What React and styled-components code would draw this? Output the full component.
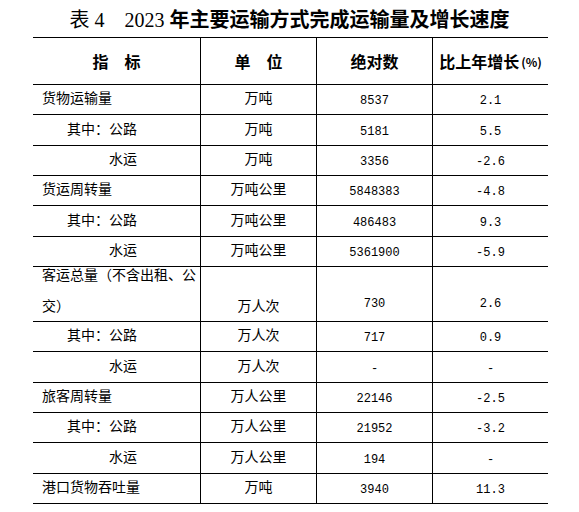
import React from 'react'
import styled, { createGlobalStyle } from 'styled-components'

const GlobalStyle = createGlobalStyle`
	body {
		margin: 0;
		background: #fff;
		color: #000;
		font-family: "Noto Sans CJK SC", sans-serif;
	}
`

const Page = styled.div`
	width: 579px;
	height: 512px;
	padding-top: 7px;
	box-sizing: border-box;
`

const Title = styled.h1`
	margin: 0 0 6px;
	height: 24px;
	line-height: 24px;
	text-align: center;
	font-size: 20px;
	white-space: pre;
`

const TitleLead = styled.span`
	font-family: "Liberation Serif", "Noto Sans CJK SC", serif;
	font-weight: 400;
`

const TitleMain = styled.span`
	font-family: "Noto Sans CJK SC", sans-serif;
	font-weight: 700;
`

const Table = styled.div`
	margin-left: 33px;
	width: 515px;
	border-top: 1px solid #000;
`

const Row = styled.div`
	display: flex;
	height: ${({ $h }) => $h}px;
	box-sizing: border-box;
	border-bottom: 1px solid #000;

	& > * + * {
		border-left: 1px solid #000;
	}
`

const Cell = styled.div`
	display: flex;
	align-items: flex-end;
	justify-content: center;
	box-sizing: border-box;
	width: ${({ $w }) => $w || 116}px;
	flex: none;
`

const HeadCell = styled(Cell)`
	align-items: center;
	font-size: 16px;
	font-weight: 700;
	white-space: pre;
`

const Percent = styled.span`
	font-size: 12px;
	margin-left: 2px;
`

const NameCell = styled(Cell)`
	justify-content: flex-start;
	padding-left: ${({ $indent }) => $indent}px;
	padding-bottom: ${({ $tall }) => ($tall ? 0 : 2)}px;
	font-size: 14px;
	line-height: ${({ $tall }) => ($tall ? 31 : 30)}px;
`

const UnitCell = styled(Cell)`
	padding-bottom: ${({ $tall }) => ($tall ? 0 : 2)}px;
	font-size: 14px;
	line-height: ${({ $tall }) => ($tall ? 31 : 30)}px;
`

const NumCell = styled(Cell)`
	padding-bottom: ${({ $tall }) => ($tall ? 4 : 0)}px;
	font-family: "Liberation Mono", monospace;
	font-size: 12px;
	line-height: 25px;
`

const indents = [9, 34, 76]

const rows = [
	{ name: '货物运输量', level: 0, unit: '万吨', value: '8537', growth: '2.1' },
	{ name: '其中：公路', level: 1, unit: '万吨', value: '5181', growth: '5.5' },
	{ name: '水运', level: 2, unit: '万吨', value: '3356', growth: '-2.6' },
	{ name: '货运周转量', level: 0, unit: '万吨公里', value: '5848383', growth: '-4.8' },
	{ name: '其中：公路', level: 1, unit: '万吨公里', value: '486483', growth: '9.3' },
	{ name: '水运', level: 2, unit: '万吨公里', value: '5361900', growth: '-5.9' },
	{ name: ['客运总量（不含出租、公', '交）'], level: 0, unit: '万人次', value: '730', growth: '2.6', tall: true },
	{ name: '其中：公路', level: 1, unit: '万人次', value: '717', growth: '0.9' },
	{ name: '水运', level: 2, unit: '万人次', value: '-', growth: '-' },
	{ name: '旅客周转量', level: 0, unit: '万人公里', value: '22146', growth: '-2.5' },
	{ name: '其中：公路', level: 1, unit: '万人公里', value: '21952', growth: '-3.2' },
	{ name: '水运', level: 2, unit: '万人公里', value: '194', growth: '-' },
	{ name: '港口货物吞吐量', level: 0, unit: '万吨', value: '3940', growth: '11.3' },
]

function Name({ name }) {
	if (!Array.isArray(name)) return <span>{name}</span>
	return (
		<span>
			{name[0]}
			<br />
			{name[1]}
		</span>
	)
}

export default function App() {
	return (
		<Page>
			<GlobalStyle />
			<Title>
				<TitleLead>表 4　2023 </TitleLead>
				<TitleMain>年主要运输方式完成运输量及增长速度</TitleMain>
			</Title>
			<Table>
				<Row $h={47}>
					<HeadCell $w={167}>指　标</HeadCell>
					<HeadCell>单　位</HeadCell>
					<HeadCell>绝对数</HeadCell>
					<HeadCell>
						比上年增长<Percent>(%)</Percent>
					</HeadCell>
				</Row>
				{rows.map((r, i) => (
					<Row key={i} $h={r.tall ? 55 : 30.33}>
						<NameCell $w={167} $indent={indents[r.level]} $tall={r.tall}>
							<Name name={r.name} />
						</NameCell>
						<UnitCell $tall={r.tall}>{r.unit}</UnitCell>
						<NumCell $tall={r.tall}>{r.value}</NumCell>
						<NumCell $tall={r.tall}>{r.growth}</NumCell>
					</Row>
				))}
			</Table>
		</Page>
	)
}
